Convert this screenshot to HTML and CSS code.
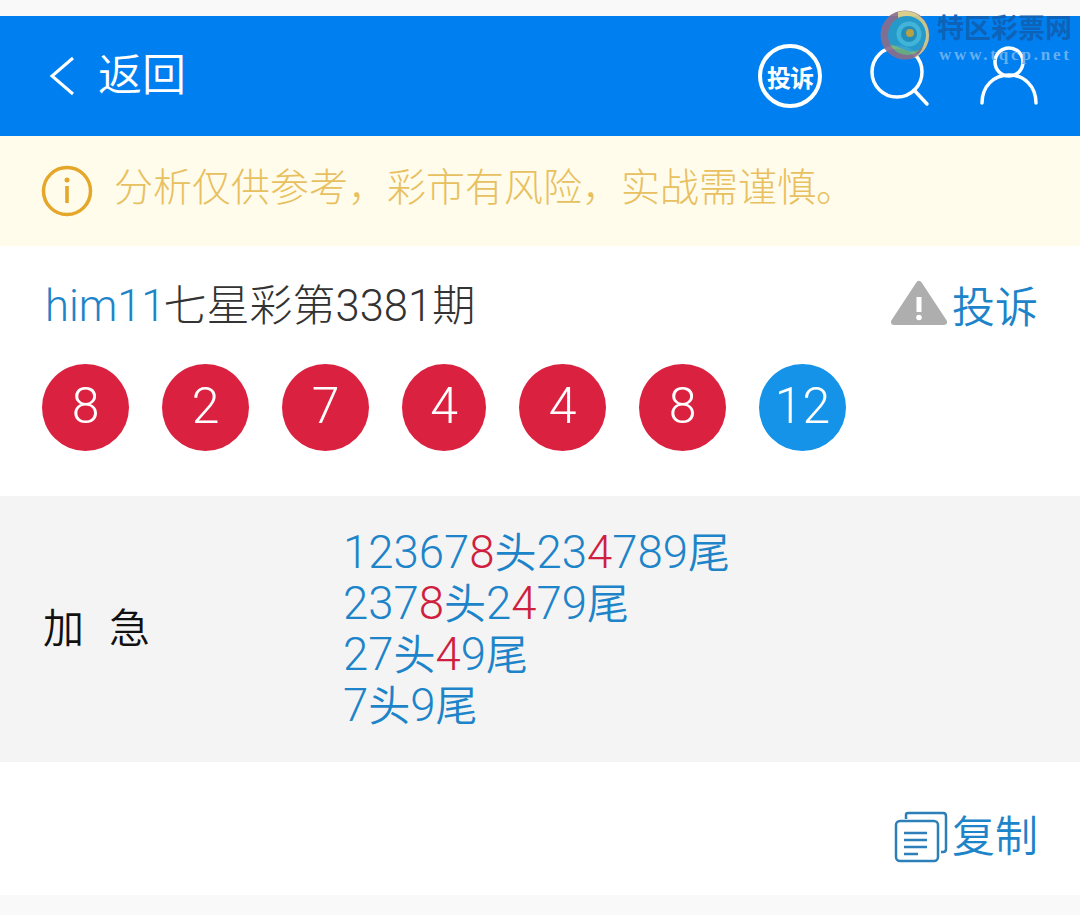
FILE: index.html
```html
<!DOCTYPE html>
<html lang="zh-CN">
<head>
<meta charset="utf-8">
<title>七星彩第3381期</title>
<link rel="stylesheet" href="styles.css">
</head>
<body>
<div class="page">
  <header class="topbar">
    <div class="back">
      <svg class="chevron" width="28" height="42" viewBox="0 0 28 42"><path d="M25 3 L4 21 L25 39" fill="none" stroke="#fff" stroke-width="3"/></svg>
      <span>返回</span>
    </div>
    <div class="actions">
      <div class="badge">投诉</div>
      <svg class="search" width="60" height="62" viewBox="0 0 60 62"><circle cx="27" cy="27" r="25" fill="none" stroke="#fff" stroke-width="3.5"/><path d="M44 45 L57 59" stroke="#fff" stroke-width="3.5" stroke-linecap="round"/></svg>
      <svg class="user" width="60" height="60" viewBox="0 0 60 60"><circle cx="29" cy="16" r="14" fill="none" stroke="#fff" stroke-width="3.5"/><path d="M2 57 C2 40 14 29 29 29 C44 29 56 40 56 57" fill="none" stroke="#fff" stroke-width="3.5" stroke-linecap="round"/></svg>
    </div>
    <div class="watermark">
      <svg class="wm-logo" width="50" height="50" viewBox="0 0 50 50"><circle cx="25" cy="25" r="24.5" fill="#8a6f8c"/><path d="M18 2 A24 24 0 0 1 49 25 A24 24 0 0 1 30 49 A20 20 0 0 0 44 26 A20 20 0 0 0 18 8 Z" fill="#d9cc86"/><circle cx="27" cy="25" r="19" fill="#2a9cc8"/><path d="M10 34 A19 19 0 0 0 40 40 L30 42 Z" fill="#6fae78"/><circle cx="29" cy="24" r="12.5" fill="#48b9d6"/><circle cx="29" cy="24" r="8" fill="#2790b8"/><circle cx="30" cy="23" r="4" fill="#c6a436"/></svg>
      <div class="wm-text">
        <div class="wm-name">特区彩票网</div>
        <div class="wm-url">www.tqcp.net</div>
      </div>
    </div>
  </header>
  <div class="notice">
    <svg width="52" height="52" viewBox="0 0 52 52"><circle cx="26" cy="26" r="23.5" fill="none" stroke="#e5a72a" stroke-width="3.5"/><circle cx="26" cy="15" r="2.5" fill="#e5a72a"/><rect x="24.2" y="21" width="3.6" height="17" fill="#e5a72a"/></svg>
    <span class="notice-text">分析仅供参考，彩市有风险，实战需谨慎。</span>
  </div>
  <section class="draw">
    <div class="draw-head">
      <div class="draw-title"><span class="blue">him11</span><span class="title-cn">七星彩第</span>3381期</div>
      <div class="report">
        <svg width="58" height="48" viewBox="0 0 58 48"><path d="M29 4 L54 42 H4 Z" fill="#aeaeae" stroke="#aeaeae" stroke-width="6" stroke-linejoin="round"/><rect x="26.5" y="17" width="5" height="15" fill="#fff"/><circle cx="29" cy="37.5" r="2.8" fill="#fff"/></svg>
        <span>投诉</span>
      </div>
    </div>
    <div class="balls">
      <div class="ball">8</div>
      <div class="ball">2</div>
      <div class="ball">7</div>
      <div class="ball ball-narrow">4</div>
      <div class="ball">4</div>
      <div class="ball">8</div>
      <div class="ball ball-blue">12</div>
    </div>
  </section>
  <section class="tip">
    <div class="tip-label">加 急</div>
    <div class="tip-lines">
      <div>12367<i>8</i><span class="cn">头</span>23<i>4</i>789<span class="cn">尾</span></div>
      <div>237<i>8</i><span class="cn">头</span>2<i>4</i>79<span class="cn">尾</span></div>
      <div>27<span class="cn">头</span><i>4</i>9<span class="cn">尾</span></div>
      <div>7<span class="cn">头</span>9<span class="cn">尾</span></div>
    </div>
  </section>
  <div class="copy-row">
    <svg class="copy-icon" width="54" height="52" viewBox="0 0 54 52"><path d="M12 8 V4 Q12 2 14 2 H49 Q52 2 52 5 V38 Q52 41 49 41 H47" fill="none" stroke="#2d7fb8" stroke-width="2.5"/><rect x="2" y="10" width="42" height="40" rx="4" fill="#fff" stroke="#2d7fb8" stroke-width="2.5"/><path d="M10 22 H33 M10 29 H33 M10 36 H33 M10 43 H24" stroke="#2d7fb8" stroke-width="2.5"/></svg>
    <span>复制</span>
  </div>
  <div class="foot"></div>
</div>
</body>
</html>
```
FILE: styles.css
```css
* { box-sizing: border-box; }
html, body { margin: 0; padding: 0; }
body { background: #fff; font-family: Roboto, "Noto Sans CJK SC", sans-serif; }
.page { width: 1080px; height: 915px; display: flex; flex-direction: column; background: #f9f9f9; padding-top: 16px; }
.topbar { position: relative; height: 120px; background: #0080f0; display: flex; justify-content: space-between; align-items: center; padding: 0 40px 0 48px; color: #fff; flex: none; }
.back { display: flex; align-items: center; gap: 22px; font-size: 44px; font-weight: 350; }
.back span { line-height: 60px; }
.actions { display: flex; align-items: center; gap: 48px; }
.user { margin-left: 2px; }
.badge { width: 64px; height: 64px; border: 4px solid #fff; border-radius: 50%; display: flex; align-items: center; justify-content: center; font-size: 24px; font-weight: 700; white-space: nowrap; letter-spacing: -1px; }
.watermark { position: absolute; left: 880px; top: -6px; display: flex; gap: 7px; opacity: 0.92; }
.wm-logo { flex: none; }
.wm-text { display: flex; flex-direction: column; padding-top: 2px; }
.wm-name { font-size: 27px; line-height: 34px; font-weight: 700; color: #1060b4; white-space: nowrap; }
.wm-url { font-family: "Liberation Serif", serif; font-size: 17px; line-height: 18px; color: #6fb3f0; letter-spacing: 2.8px; font-weight: 700; white-space: nowrap; padding-left: 2px; }
.notice { height: 110px; background: #fffcec; display: flex; align-items: center; padding-left: 41px; gap: 21px; font-size: 39px; font-weight: 300; color: #e8c060; flex: none; white-space: nowrap; }
.notice-text { margin-top: -15px; }
.draw { height: 250px; background: #fff; padding: 28px 42px 0 42px; flex: none; }
.draw-head { display: flex; justify-content: space-between; align-items: center; height: 56px; }
.draw-title { font-size: 43.5px; font-weight: 300; color: #333; padding-left: 3px; white-space: nowrap; }
.title-cn { font-size: 43px; margin-left: -2px; }
.blue { color: #1d84c9; }
.report { display: flex; align-items: center; gap: 4px; font-size: 43px; font-weight: 350; color: #1d84c9; margin-top: 4px; }
.balls { display: flex; gap: 33px; margin-top: 34px; }
.ball { width: 87px; height: 87px; border-radius: 50%; background: #da2140; color: #fff; display: flex; align-items: center; justify-content: center; font-size: 50px; font-weight: 300; padding-bottom: 3px; flex: none; }
.ball-narrow { width: 84px; }
.ball-blue { background: #1593e8; }
.tip { height: 266px; background: #f4f4f4; display: flex; align-items: center; flex: none; }
.tip-label { width: 343px; padding-left: 43px; font-size: 41px; font-weight: 350; color: #111; white-space: pre; word-spacing: 15px; margin-top: -8px; }
.tip-lines { font-size: 45.5px; line-height: 51px; font-weight: 300; color: #1d84c9; white-space: nowrap; }
.tip-lines i { font-style: normal; color: #cf1f3f; }
.cn { font-size: 42px; font-weight: 350; line-height: 1; }
.copy-row { height: 133px; background: #fff; display: flex; justify-content: flex-end; align-items: center; padding: 8px 42px 0 0; gap: 4px; font-size: 43px; font-weight: 350; color: #1d84c9; flex: none; }
.copy-icon { margin-top: 8px; }
.foot { flex: 1; background: #f9f9f9; }
```
